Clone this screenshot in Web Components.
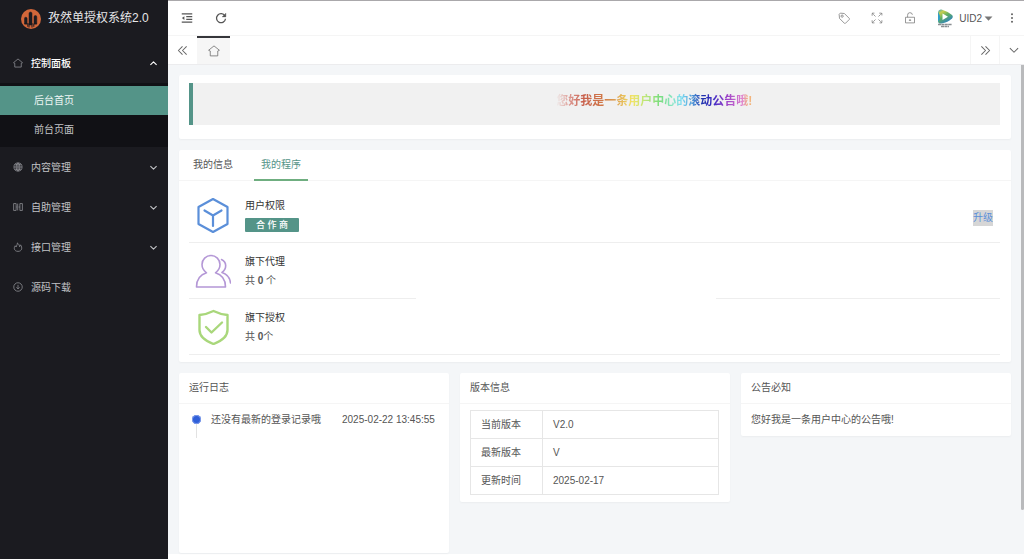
<!DOCTYPE html>
<html lang="zh-CN">
<head>
<meta charset="utf-8">
<meta name="viewport" content="width=device-width, initial-scale=1">
<title>孜然单授权系统2.0</title>
<style>
  :root {
    --teal: #549488;
    --text: #555;
    --line: #eee;
    --side: #1b1b20;
    --side-deep: #111115;
  }
  html, body { margin: 0; height: 100%; }
  body {
    font: 10px/19px "Liberation Sans", "Noto Sans CJK SC", sans-serif;
    color: var(--text);
    background: #fff;
  }
</style>
</head>
<body>
<app-shell>
  <side-nav slot="side" brand="孜然单授权系统2.0">
    <nav-group icon="home" label="控制面板" open>
      <nav-link label="后台首页" active></nav-link>
      <nav-link label="前台页面"></nav-link>
    </nav-group>
    <nav-group icon="globe" label="内容管理" arrow></nav-group>
    <nav-group icon="columns" label="自助管理" arrow></nav-group>
    <nav-group icon="fire" label="接口管理" arrow></nav-group>
    <nav-group icon="download" label="源码下载"></nav-group>
  </side-nav>
  <top-bar slot="top" user="UID2"></top-bar>
  <tab-strip slot="tabs"></tab-strip>

  <ui-card>
    <scroll-notice>您好我是一条用户中心的滚动公告哦!</scroll-notice>
  </ui-card>

  <program-card>
    <program-row icon="cube" label="用户权限">
      <level-badge>合 作 商</level-badge>
      <upgrade-link slot="action">升级</upgrade-link>
    </program-row>
    <program-row icon="users" label="旗下代理" broken>共 <b>0</b> 个</program-row>
    <program-row icon="shield" label="旗下授权">共 <b>0</b>个</program-row>
  </program-card>

  <card-columns>
    <ui-card heading="运行日志" tall>
      <log-entry time="2025-02-22 13:45:55">还没有最新的登录记录哦</log-entry>
    </ui-card>
    <ui-card heading="版本信息"><version-table></version-table></ui-card>
    <ui-card heading="公告必知"><notice-text>您好我是一条用户中心的公告哦!</notice-text></ui-card>
  </card-columns>
</app-shell>

<script>
const ICONS = {
  home: '<path d="M.8 7.500 8 1.500l7.200 6-2 .8V14.500H2.800V8.300z"/>',
  globe: '<circle cx="8" cy="8" r="6.500"/><ellipse cx="8" cy="8" rx="3" ry="6.500"/><path d="M1.500 8h13M3 4.500h10M3 11.500h10M8 1.500v13"/>',
  columns: '<path d="M1 2.500h4v11H1zM11 2.500h4v11h-4zM7.500 2.500v11M9 8h2M5 8h1"/>',
  fire: '<path d="M3.500 6C1 9 1.500 15 8 15s7.500-6 4-10.500l-1.500 3C10.200 5 9 3 7 1.500c.2 3-1.500 4-2 6.500z"/>',
  download: '<circle cx="8" cy="8" r="6.800"/><path d="M8 4.500v6.500M5.500 8.500 8 11l2.500-2.500"/>',
  up: '<path d="m2.500 10.500 5.500-5.500 5.500 5.500"/>',
  down: '<path d="m2.500 5.500 5.500 5.500 5.500-5.500"/>',
  outdent: '<path d="M1 2.500h14M7 6.200h8M7 9.800h8M1 13.500h14"/><path d="M4.500 5.500v5L1.200 8z" fill="currentColor" stroke="none"/>',
  refresh: '<path d="M13.200 5.200A6 6 0 1 0 14 9"/><path d="M14.500 1.500v5h-5z" fill="currentColor" stroke-width=".5"/>',
  left2: '<path d="M8 2 2 8l6 6M14 2 8 8l6 6"/>',
  right2: '<path d="m2 2 6 6-6 6M8 2l6 6-6 6"/>',
  tag: '<path d="M1.500 3 3 1.500l5.500.5 6.500 6.500q.8.800 0 1.500L10 15q-.8.800-1.500 0L2 8.500z"/><circle cx="5.500" cy="5.500" r="1.500"/>',
  expand: '<path d="M1.500 5V1.500H5M1.500 1.500 6 6M11 1.500h3.500V5M14.500 1.500 10 6M1.500 11v3.500H5M1.500 14.500 6 10M14.500 11v3.500H11M14.500 14.500 10 10" stroke-dasharray="3 .6"/>',
  lock: '<path d="M2 7h12v7.500H2zM4.800 7V4.500a3.200 3.200 0 0 1 6.400-.8M8 9.500V12M6.500 11h3"/>',
  more: '<g fill="currentColor" stroke="none"><circle cx="8" cy="2" r="1.500"/><circle cx="8" cy="8" r="1.500"/><circle cx="8" cy="14" r="1.500"/></g>',
  caret: '<path d="M1 4.500h14L8 12z" fill="currentColor" stroke="none"/>',
  house: '<path d="M.8 7 8 1.200 15.200 7l-2.200 1v6.500H3V8z"/>'
};
const svg = (name, size, weight = 1) =>
  `<svg viewBox="0 0 16 16" width="${size}" height="${size}" fill="none" stroke="currentColor" stroke-width="${weight}" stroke-linejoin="round" aria-hidden="true">${ICONS[name]}</svg>`;

const ART = {
  cube: '<g stroke="#5b8fd9" stroke-width="2.200"><path d="M18 2 32.500 10v17L18 35 3.500 27V10z"/><path d="M9.500 13.500 18 18.500l8.500-5M18 18.500V29"/></g>',
  users: '<g stroke="#b497d6" stroke-width="1.600"><path d="M11.500 19.800C8.500 17.500 7 14.500 7 11.500a9 9 0 0 1 18 0c0 3-1.500 6-4.500 8.300 6.500 2 10 7 10 14.200h-29c0-7.200 3.500-12.200 10-14.200z"/><path d="M26.500 6.500c5.500 2.500 5.500 9.500.5 13 4.500 1.500 8 5.500 8.500 10.500"/></g>',
  shield: '<g stroke="#a9d77b" stroke-width="2.400"><path d="M18.500 2c4 2 9 3.500 14 4v15c0 6-6 11-14 14-8-3-14-8-14-14V6c5-.5 10-2 14-4z"/><path d="m11 18 5.500 5.500L27 13.500"/></g>'
};

function define(name, render) {
  customElements.define(name, class extends HTMLElement {
    connectedCallback() {
      if (this.shadowRoot) return;
      const t = document.createElement('template');
      t.innerHTML = render(this);
      this.attachShadow({ mode: 'open' }).append(t.content.cloneNode(true));
    }
  });
}
const attr = (el, n) => el.getAttribute(n) || '';
const BUTTON = 'button{font:inherit;color:inherit;background:none;border:0;margin:0;padding:0;cursor:pointer}svg{display:block;flex:none}';

define('app-shell', () => `
  <style>
    :host { display: grid; grid-template-columns: 168px minmax(0, 1fr); min-height: 100vh; }
    .main { display: flex; flex-direction: column; border-top: 1px solid #aaa8ab; box-sizing: border-box; }
    .view { position: relative; flex: 1; }
    main { display: flex; flex-direction: column; gap: 11px; padding: 10px 13px 1px 11px; background: #f4f6f8; }
    .thumb { position: absolute; top: 0; right: 0; width: 3px; height: 90%; background: #b9babc; border-radius: 0 0 2px 2px; }
  </style>
  <slot name="side"></slot>
  <div class="main">
    <slot name="top"></slot><slot name="tabs"></slot>
    <div class="view"><main><slot></slot></main><div class="thumb"></div></div>
  </div>`);

define('side-nav', el => `
  <style>
    :host { display: block; background: var(--side); color: #c2c3c6; }
    header { display: flex; align-items: center; gap: 7px; height: 37px; padding: 0 0 0 21px; margin-bottom: 6px; color: #e6e6e8; font-size: 12px; white-space: nowrap; }
    svg { flex: none; }
  </style>
  <header>
    <svg width="20" height="20" viewBox="0 0 20 20" aria-hidden="true">
      <circle cx="10" cy="10" r="10" fill="#d2673a"/>
      <path d="M3.500 9.500a1.300 1.300 0 0 1 2.600 0V15H3.500zM8 4.500a1.500 1.500 0 0 1 3 0V16H8zM13 8a1.400 1.400 0 0 1 2.800 0v7H13z" fill="#1b1b20" stroke="#1b1b20" stroke-width=".5"/>
      <path d="M3.500 14.800h3.300v3M8 14v4.500M11 14v4.500M15.800 14.800h-3v3" fill="none" stroke="#1b1b20" stroke-width="1"/>
    </svg>
    <span>${attr(el, 'brand')}</span>
  </header>
  <nav><slot></slot></nav>`);

define('nav-group', el => {
  const open = el.hasAttribute('open');
  const arrow = open ? svg('up', 9, 2) : el.hasAttribute('arrow') ? svg('down', 9, 2) : '';
  return `
  <style>
    ${BUTTON}
    :host { display: block; }
    :host([open]) button { color: #fff; font-weight: 500; }
    button { display: flex; align-items: center; width: 100%; height: 40px; padding: 0 10px 0 13px; text-align: left; }
    button span { flex: 1; padding-left: 8px; }
    button svg:first-child { color: #93949a; }
    .sub { padding: 3px 0; background: var(--side-deep); }
  </style>
  <button type="button" aria-expanded="${open}">${svg(attr(el, 'icon'), 10, 1.2)}<span>${attr(el, 'label')}</span>${arrow}</button>
  ${open ? '<div class="sub"><slot></slot></div>' : ''}`;
});

define('nav-link', el => `
  <style>
    :host { display: block; }
    a { display: block; padding-left: 34px; line-height: 29px; color: #c2c3c6; text-decoration: none; }
    :host([active]) a { background: var(--teal); color: #eef7f5; }
  </style>
  <a href="#">${attr(el, 'label')}</a>`);

define('top-bar', el => `
  <style>
    ${BUTTON}
    :host { display: flex; align-items: center; height: 34px; border-bottom: 1px solid #f5f5f5; padding: 0 7px 0 13px; color: #555; }
    .left { display: flex; gap: 22px; flex: 1; }
    .right { display: flex; align-items: center; gap: 21px; color: #777; }
    .user { display: flex; align-items: center; gap: 6px; color: #555; }
    .user span { display: flex; align-items: center; gap: 2px; }
    .user span svg { color: #777; }
    .more { margin-left: 14px; }
  </style>
  <div class="left">
    <button type="button" aria-label="收起菜单">${svg('outdent', 12, 1.5)}</button>
    <button type="button" aria-label="刷新">${svg('refresh', 12, 1.7)}</button>
  </div>
  <div class="right">
    <button type="button" aria-label="便签">${svg('tag', 12)}</button>
    <button type="button" aria-label="全屏">${svg('expand', 12)}</button>
    <button type="button" aria-label="锁屏">${svg('lock', 12)}</button>
    <button type="button" class="user">
      <svg width="16" height="20" viewBox="0 0 16 20" aria-hidden="true">
        <defs><linearGradient id="g" x1="0" y1="0" x2=".6" y2="1"><stop offset="0" stop-color="#3aa3d0"/><stop offset=".25" stop-color="#c9cf4c"/><stop offset=".55" stop-color="#5fae62"/><stop offset="1" stop-color="#2a7fc8"/></linearGradient></defs>
        <path d="M1 4Q1.500 1 4.500 1.500 11 3.500 15 7q1.500 1.500 0 3.500-4 4-10.500 5Q1 16 1 13z" fill="url(#g)"/>
        <path d="M1 4C4 8 3.500 12 1 13.500z" fill="#2f9fc9"/>
        <path d="M5.500 5.500v6.500l5.500-3.300z" fill="#fff"/>
        <path d="M1 16.500h14M4 18.500h8" stroke="#8a8f93" stroke-width="1.300" stroke-dasharray="3 .4"/>
      </svg>
      <span>${attr(el, 'user')}${svg('caret', 9)}</span>
    </button>
  </div>
  <button type="button" class="more" aria-label="更多">${svg('more', 10)}</button>`);

define('tab-strip', () => `
  <style>
    ${BUTTON}
    :host { display: flex; height: 28px; border-bottom: 1px solid #ececee; color: #666; }
    button { display: grid; place-items: center; width: 29px; }
    .home { width: 33px; background: #f6f6f6; border-top: 2px solid #35363a; }
    .space { flex: 1; }
    .next, .menu { border-left: 1px solid #f5f5f5; }
    .menu { width: 25px; padding-left: 4px; }
  </style>
  <button type="button" aria-label="向左">${svg('left2', 11, 1.5)}</button>
  <button type="button" class="home" aria-label="主页">${svg('house', 12)}</button>
  <div class="space"></div>
  <button type="button" class="next" aria-label="向右">${svg('right2', 11, 1.5)}</button>
  <button type="button" class="menu" aria-label="标签菜单">${svg('down', 12, 1.4)}</button>`);

define('ui-card', el => `
  <style>
    :host { display: block; background: #fff; border-radius: 2px; box-shadow: 0 1px 2px rgba(0,0,0,.04); }
    :host([tall]) { min-height: 180px; }
    h2 { margin: 0; padding: 0 10px; font: inherit; line-height: 30px; border-bottom: 1px solid #f5f5f5; }
    .body { padding: 6px 11px 7px 10px; }
    .plain { padding: 8px 11px 14px 10px; }
  </style>
  ${attr(el, 'heading') ? `<h2>${attr(el, 'heading')}</h2><div class="body">` : '<div class="plain">'}<slot></slot></div>`);

define('scroll-notice', () => `
  <style>
    :host { display: block; box-sizing: border-box; height: 42px; padding-top: 9px; background: #f1f1f1; border-left: 4px solid var(--teal); overflow: hidden; white-space: nowrap; }
    strong {
      display: inline-block; margin-left: 45%; font-size: 12px; color: transparent;
      background: linear-gradient(90deg, #e9b7b700 0, #dc9790 7%, #c8604c 14%, #d07848 24%, #dfa450 31%, #f2e468 39%, #b9e67a 46%, #78dd7c 53%, #88e6c0 59%, #7cdcf2 64%, #4b90d4 70%, #2030ac 75%, #3c2cc4 80%, #9a3fc8 87%, #e084d0 95%, #f2b47c 98%);
      -webkit-background-clip: text; background-clip: text;
    }
  </style>
  <strong><slot></slot></strong>`);

define('program-card', () => `
  <style>
    ${BUTTON}
    :host { display: block; background: #fff; border-radius: 2px; box-shadow: 0 1px 2px rgba(0,0,0,.04); }
    .tabs { display: flex; gap: 14px; padding-left: 7px; height: 30px; border-bottom: 1px solid #f5f5f5; }
    .tabs button { padding: 0 7px; height: 31px; box-sizing: border-box; border-bottom: 2px solid transparent; }
    .tabs [aria-selected=true] { color: var(--teal); border-color: #6fae80; }
    .list { padding: 6px 11px 7px 10px; }
  </style>
  <div class="tabs" role="tablist">
    <button type="button" role="tab" aria-selected="false">我的信息</button>
    <button type="button" role="tab" aria-selected="true">我的程序</button>
  </div>
  <div class="list"><slot></slot></div>`);

define('program-row', el => `
  <style>
    :host { display: flex; align-items: center; position: relative; height: 55px; padding: 0 7px 1px 6px; }
    :host::after { content: ""; position: absolute; inset: auto 0 0 0; height: 1px; background: var(--line); }
    :host([broken])::after { background: linear-gradient(90deg, var(--line) 28%, transparent 28% 65%, var(--line) 65%); }
    .text { flex: 1; padding-left: 14px; }
    .name { color: #333; }
  </style>
  <svg width="36" height="36" viewBox="0 0 36 36" fill="none" stroke-linejoin="round" stroke-linecap="round" aria-hidden="true">${ART[attr(el, 'icon')]}</svg>
  <div class="text"><div class="name">${attr(el, 'label')}</div><div><slot></slot></div></div>
  <slot name="action"></slot>`);

define('level-badge', () => `
  <style>
    :host { display: inline-block; padding: 0 11px; font-size: 9px; line-height: 14px; font-weight: 500; color: #fff; background: var(--teal); border-radius: 1px; }
  </style><slot></slot>`);

define('upgrade-link', () => `
  <style>
    :host { display: block; padding-top: 6px; line-height: 16px; }
    a { display: block; color: #5b8fd9; background: #d6d6d6; text-decoration: none; }
  </style><a href="#"><slot></slot></a>`);

define('card-columns', () => `
  <style>:host { display: grid; grid-template-columns: repeat(3, minmax(0, 1fr)); gap: 11px; align-items: start; }</style><slot></slot>`);

define('log-entry', el => `
  <style>
    :host { display: flex; position: relative; gap: 21px; padding-left: 22px; white-space: nowrap; }
    .dot { position: absolute; left: 3px; top: 5px; width: 9px; height: 9px; border-radius: 50%; background: #2f5fd9; box-shadow: inset 0 0 0 1px #7f9cea; }
    .line { position: absolute; left: 7px; top: 14px; width: 1px; height: 14px; background: #e2e2e2; }
  </style>
  <i class="line"></i><i class="dot"></i><span><slot></slot></span><time>${attr(el, 'time')}</time>`);

define('version-table', () => `
  <style>
    :host { display: block; }
    table { width: 100%; border-collapse: collapse; table-layout: fixed; }
    th, td { box-sizing: border-box; height: 28px; padding: 0 10px; border: 1px solid #e6e6e6; text-align: left; font-weight: normal; line-height: 19px; }
    th { width: 72px; }
  </style>
  <table>
    <tr><th scope="row">当前版本</th><td>V2.0</td></tr>
    <tr><th scope="row">最新版本</th><td>V</td></tr>
    <tr><th scope="row">更新时间</th><td>2025-02-17</td></tr>
  </table>`);

define('notice-text', () => `<style>:host { display: block; }</style><slot></slot>`);
</script>
</body>
</html>
